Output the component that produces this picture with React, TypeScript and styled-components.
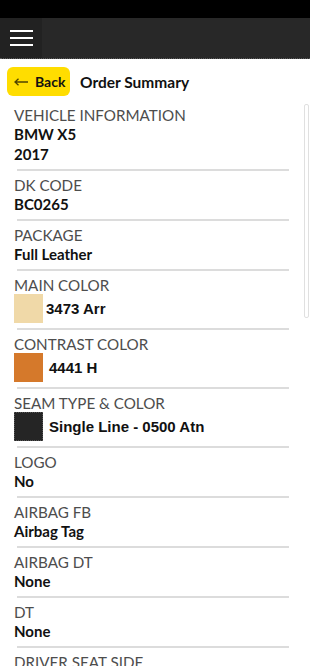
// Packages
import styled, { createGlobalStyle } from 'styled-components';

// Data
type Kind = 'main' | 'contrast' | 'seam';

type Item = {
  label: string;
  values: string[];
  swatch?: Kind;
};

const items: Item[] = [
  { label: 'VEHICLE INFORMATION', values: ['BMW X5', '2017'] },
  { label: 'DK CODE', values: ['BC0265'] },
  { label: 'PACKAGE', values: ['Full Leather'] },
  { label: 'MAIN COLOR', values: ['3473 Arr'], swatch: 'main' },
  { label: 'CONTRAST COLOR', values: ['4441 H'], swatch: 'contrast' },
  { label: 'SEAM TYPE & COLOR', values: ['Single Line - 0500 Atn'], swatch: 'seam' },
  { label: 'LOGO', values: ['No'] },
  { label: 'AIRBAG FB', values: ['Airbag Tag'] },
  { label: 'AIRBAG DT', values: ['None'] },
  { label: 'DT', values: ['None'] },
  { label: 'DRIVER SEAT SIDE', values: ['Left'] },
];

// Main
export default function App() {
  return (
    <Page>
      <GlobalStyle />
      <StatusStrip />
      <Header>
        <MenuButton aria-label='Menu'>
          <MenuLine />
          <MenuLine />
          <MenuLine />
        </MenuButton>
      </Header>

      <Body>
        <TitleRow>
          <BackButton>
            <svg width='14' height='8' viewBox='0 0 14 8'>
              <path d='M1 4H14M4.5 0.8L1 4L4.5 7.2' fill='none' stroke='#4f4300' strokeWidth='1.3' />
            </svg>
            Back
          </BackButton>
          <Title>Order Summary</Title>
        </TitleRow>

        <List>
          {items.map((item, i) => (
            <Row key={i}>
              <Label>{item.label}</Label>
              {item.swatch ? (
                <SwatchValue>
                  <Swatch $kind={item.swatch} />
                  <SwatchText $kind={item.swatch}>{item.values[0]}</SwatchText>
                </SwatchValue>
              ) : (
                item.values.map((v) => <Value key={v}>{v}</Value>)
              )}
              <Divider />
            </Row>
          ))}
        </List>

        <ScrollThumb />
      </Body>
    </Page>
  );
}

const GlobalStyle = createGlobalStyle`
  html, body {
    margin: 0;
    padding: 0;
    background: #fff;
    font-family: Lato, 'Open Sans', sans-serif;
  }
  body {
    width: 310px;
    height: 666px;
    overflow: hidden;
  }
`;

const Page = styled.div`
  width: 310px;
  height: 666px;
  display: flex;
  flex-direction: column;
  overflow: hidden;
`;

const StatusStrip = styled.div`
  height: 18px;
  background: #000;
  flex-shrink: 0;
`;

const Header = styled.header`
  height: 40px;
  background: #282828;
  border-bottom: 1px dotted #5a5a5a;
  display: flex;
  flex-shrink: 0;
`;

const MenuButton = styled.div`
  width: 42px;
  height: 40px;
  background: #222;
  display: flex;
  flex-direction: column;
  justify-content: center;
  gap: 5px;
  padding-left: 10px;
  box-sizing: border-box;
`;

const MenuLine = styled.span`
  display: block;
  width: 23px;
  height: 2px;
  background: #fff;
`;

const Body = styled.main`
  position: relative;
  flex: 1;
  overflow: hidden;
`;

const TitleRow = styled.div`
  display: flex;
  align-items: center;
  gap: 10px;
  padding: 8px 7px 5px;
`;

const BackButton = styled.div`
  height: 29px;
  width: 63px;
  box-sizing: border-box;
  background: #ffdd00;
  border-radius: 6px;
  display: flex;
  align-items: center;
  gap: 7px;
  padding-left: 7px;
  font-weight: 700;
  font-size: 14px;
  color: #111;
  white-space: nowrap;

  svg {
    flex-shrink: 0;
  }
`;

const Title = styled.h1`
  margin: 0;
  font-size: 15.5px;
  font-weight: 700;
  color: #111;
`;

const List = styled.div`
  padding: 0 21px 0 14px;
`;

const Row = styled.div`
  padding-top: 5px;
`;

const Label = styled.div`
  font-size: 15.2px;
  line-height: 18px;
  color: #4d4d4d;
  font-weight: 400;
`;

const Value = styled.div`
  font-size: 15px;
  line-height: 20px;
  font-weight: 700;
  color: #111;
`;

const SwatchValue = styled.div`
  display: flex;
  align-items: center;
  height: 29px;
`;

const swatchColors: Record<Kind, string> = {
  main: '#f0d9a8',
  contrast: '#d5792b',
  seam: '#252525',
};

const Swatch = styled.span<{ $kind: Kind }>`
  width: 29px;
  height: 29px;
  box-sizing: border-box;
  background: ${(p) => swatchColors[p.$kind]};
  border: ${(p) => (p.$kind === 'seam' ? '1px dotted #555' : 'none')};
  flex-shrink: 0;
`;

const SwatchText = styled.span<{ $kind: Kind }>`
  margin-left: ${(p) => (p.$kind === 'main' ? '3px' : '6px')};
  font-family: 'Liberation Sans', Arial, sans-serif;
  font-size: 15px;
  font-weight: 700;
  color: #111;
`;

const Divider = styled.div`
  height: 2px;
  margin: 5px 0 0 3px;
  background: #dcdcdc;
`;

const ScrollThumb = styled.div`
  position: absolute;
  top: 45px;
  right: 1px;
  width: 3px;
  height: 212px;
  border: 1px solid #e0e0e0;
  border-radius: 2px;
`;
